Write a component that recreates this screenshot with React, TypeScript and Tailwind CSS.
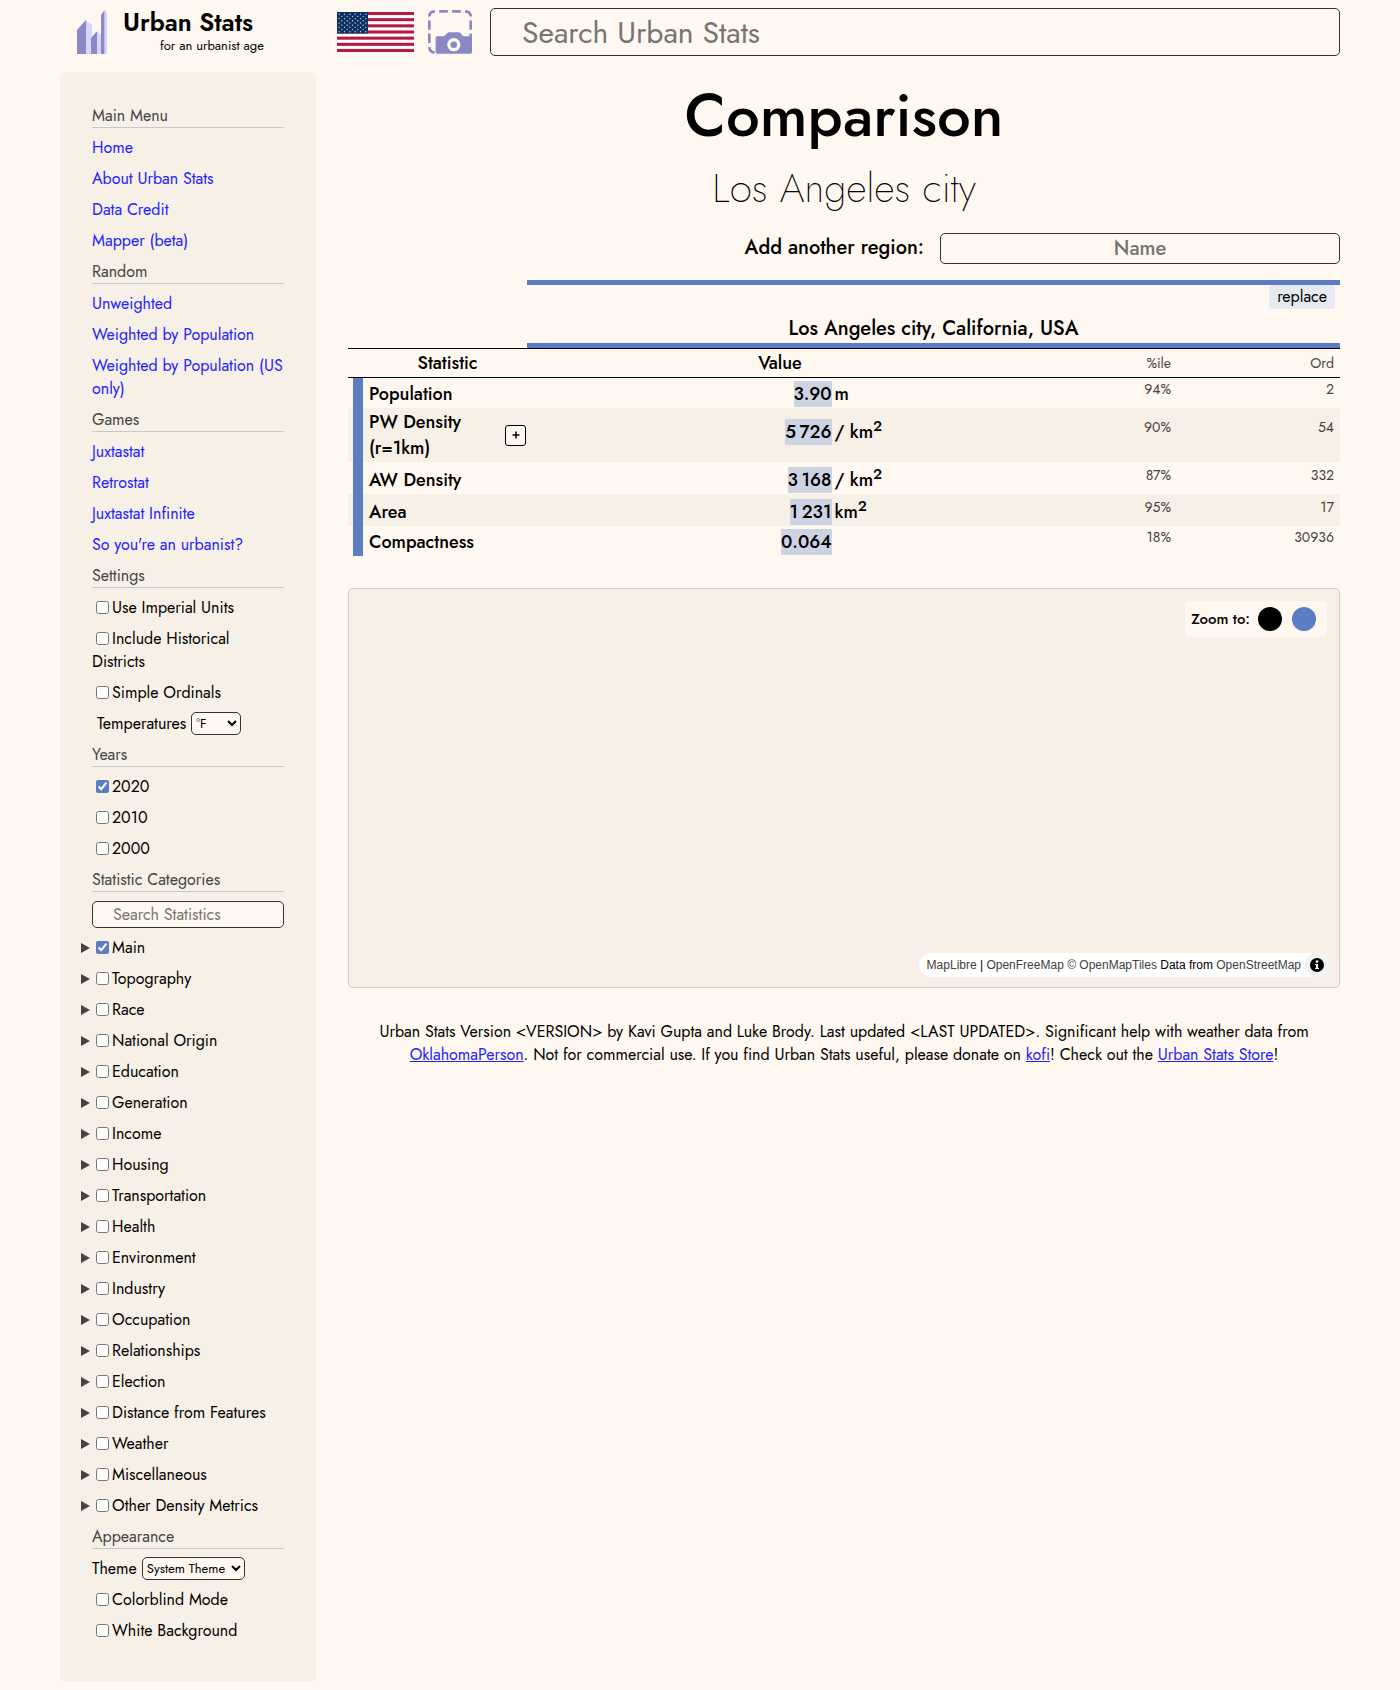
import type { ReactNode } from 'react';

function Logo() {
  return (
    <svg viewBox="0 0 90 132" className="h-11 w-[30px]" aria-hidden="true">
      <g fill="#8a89c4">
        <path d="M0 60 27 30V132H0Z" />
        <path d="M42 83 60 64V132H42Z" />
        <path d="M72 15 83 0V132H72Z" />
      </g>
      <g fill="#d5d5ff">
        <path d="M27 30 45 45V80L42 83V132H27Z" />
        <path d="M60 64 72 75V132H60Z" />
        <path d="M83 0 90 8V132H83Z" />
      </g>
    </svg>
  );
}

function Flag() {
  const stars = Array.from({ length: 9 }, (_, row) =>
    Array.from({ length: row % 2 === 0 ? 6 : 5 }, (_, col) => (
      <circle key={`${row}-${col}`} cx={6.5 + col * 16 + (row % 2) * 8} cy={6.5 + row * 6.6} r="2" />
    )),
  );
  return (
    <svg viewBox="0 0 231 120" preserveAspectRatio="none" className="h-10 w-[77px]" aria-hidden="true">
      <rect width="231" height="120" fill="#ffffff" />
      {Array.from({ length: 7 }, (_, i) => (
        <rect key={i} y={(i * 240) / 13} width="231" height={120 / 13} fill="#b31942" />
      ))}
      <rect width="93" height="64.6" fill="#0a3161" />
      <g fill="#ffffff" opacity="0.85">{stars}</g>
    </svg>
  );
}

function Camera() {
  return (
    <svg viewBox="0 0 133 133" className="size-11" aria-hidden="true">
      <g fill="none" stroke="#8a89c4" strokeWidth="8">
        <path d="M4 20Q4 4 21 4M34 4H60M73 4H99M112 4Q129 4 129 20" />
        <path d="M4 32V60M4 71V100M129 32V60M129 71V84M4 112Q5 127 20 129" />
      </g>
      <path
        fill="#8a89c4"
        fillRule="evenodd"
        d="M28 79H48Q53 78 56 72Q58 67 64 67H92Q98 67 100 72Q103 78 108 79H128Q133 79 133 84V127Q133 132 128 132H28Q23 132 23 127V84Q23 79 28 79ZM78 85A20 20 0 1 0 78 125A20 20 0 1 0 78 85Z"
      />
      <circle cx="78" cy="105" r="10" fill="#8a89c4" />
    </svg>
  );
}

function Section({ title, children }: { title: string; children: ReactNode }) {
  return (
    <section>
      <h2 className="mb-2 border-b border-[#c8c8cc] text-[#444444]">{title}</h2>
      <ul>{children}</ul>
    </section>
  );
}

function LinkItem({ children }: { children: string }) {
  return (
    <li className="mb-2">
      <a href="#" className="text-[#2222ff]">{children}</a>
    </li>
  );
}

function Check({ label, checked = false }: { label: string; checked?: boolean }) {
  return (
    <label>
      <input
        type="checkbox"
        defaultChecked={checked}
        className="mr-[3px] ml-1 size-[13px] align-[-1px] accent-[#5a7dc3]"
      />
      {label}
    </label>
  );
}

function CheckItem(props: { label: string; checked?: boolean }) {
  return (
    <li className="mb-2">
      <Check {...props} />
    </li>
  );
}

function Category({ label, checked }: { label: string; checked?: boolean }) {
  return (
    <li className="mb-2 -ml-[11px] flex items-center">
      <button type="button" aria-label={`Expand ${label}`} className="w-[11px]">
        <svg viewBox="0 0 9 10" className="mt-px h-[10px] w-[9px]" aria-hidden="true">
          <path d="M0 0 9 5 0 10Z" fill="#444444" />
        </svg>
      </button>
      <Check label={label} checked={checked} />
    </li>
  );
}

const categories = [
  'Main', 'Topography', 'Race', 'National Origin', 'Education', 'Generation', 'Income', 'Housing',
  'Transportation', 'Health', 'Environment', 'Industry', 'Occupation', 'Relationships', 'Election',
  'Distance from Features', 'Weather', 'Miscellaneous', 'Other Density Metrics',
];

const selectClass = 'ml-[5px] h-[23px] rounded-[5px] border border-[#333333] bg-[#fff8f0] text-[13px] text-black';

function Sidebar() {
  return (
    <nav className="w-64 shrink-0 rounded-[5px] bg-[#f7f0e6] p-8 text-[16px] leading-[23px]">
      <Section title="Main Menu">
        <LinkItem>Home</LinkItem>
        <LinkItem>About Urban Stats</LinkItem>
        <LinkItem>Data Credit</LinkItem>
        <LinkItem>Mapper (beta)</LinkItem>
      </Section>
      <Section title="Random">
        <LinkItem>Unweighted</LinkItem>
        <LinkItem>Weighted by Population</LinkItem>
        <LinkItem>Weighted by Population (US only)</LinkItem>
      </Section>
      <Section title="Games">
        <LinkItem>Juxtastat</LinkItem>
        <LinkItem>Retrostat</LinkItem>
        <LinkItem>Juxtastat Infinite</LinkItem>
        <LinkItem>So you're an urbanist?</LinkItem>
      </Section>
      <Section title="Settings">
        <CheckItem label="Use Imperial Units" />
        <CheckItem label="Include Historical Districts" />
        <CheckItem label="Simple Ordinals" />
        <li className="mb-2 flex items-center pl-[5px]">
          <label htmlFor="temperatures">Temperatures</label>
          <select id="temperatures" className={`w-[50px] ${selectClass}`}>
            <option>°F</option>
            <option>°C</option>
          </select>
        </li>
      </Section>
      <Section title="Years">
        <CheckItem label="2020" checked />
        <CheckItem label="2010" />
        <CheckItem label="2000" />
      </Section>
      <Section title="Statistic Categories">
        <li className="mb-2 flex pt-px">
          <input
            type="text"
            aria-label="Search Statistics"
            placeholder="Search Statistics"
            className="h-[27px] w-full rounded-[5px] border border-[#333333] bg-[#fff8f0] px-5 placeholder:text-[#757575]"
          />
        </li>
        {categories.map((label) => (
          <Category key={label} label={label} checked={label === 'Main'} />
        ))}
      </Section>
      <Section title="Appearance">
        <li className="mb-2 flex items-center">
          <label htmlFor="theme">Theme</label>
          <select id="theme" className={`w-[103px] ${selectClass}`}>
            <option>System Theme</option>
            <option>Light Theme</option>
            <option>Dark Theme</option>
          </select>
        </li>
        <CheckItem label="Colorblind Mode" />
        <CheckItem label="White Background" />
      </Section>
    </nav>
  );
}

type Row = { name: string; value: string; unit: string; squared?: boolean; pct: string; ord: string; plus?: boolean };

const rows: Row[] = [
  { name: 'Population', value: '3.90', unit: 'm', pct: '94%', ord: '2' },
  { name: 'PW Density (r=1km)', value: '5\u2009726', unit: '/ km', squared: true, pct: '90%', ord: '54', plus: true },
  { name: 'AW Density', value: '3\u2009168', unit: '/ km', squared: true, pct: '87%', ord: '332' },
  { name: 'Area', value: '1\u2009231', unit: 'km', squared: true, pct: '95%', ord: '17' },
  { name: 'Compactness', value: '0.064', unit: '', pct: '18%', ord: '30936' },
];

function StatsRow({ row }: { row: Row }) {
  const namePad = row.plus ? 'py-px' : row.squared ? 'pt-1' : 'pt-0.5';
  const valuePad = row.plus ? 'pb-1.5' : row.squared ? 'pt-1' : 'pt-0.5';
  const rankPad = row.plus ? 'pb-4' : row.squared ? 'pb-1.5' : 'pb-2';
  const rank = `pr-1.5 text-right text-[14px] leading-[18px] text-[#444444] ${rankPad}`;
  return (
    <tr className={`even:bg-[#f7f0e6] ${row.squared ? 'h-8' : 'h-[30px]'}`}>
      <td className="border-l-[5px] border-transparent bg-[#5a7dc3] bg-clip-padding" />
      <th scope="row" className={`pr-px pl-1.5 text-left font-medium ${namePad}`}>
        <div className="flex items-center justify-between">
          <span>{row.name}</span>
          {row.plus && (
            <button
              type="button"
              aria-label="Expand PW Density"
              className="flex size-[21px] shrink-0 items-center justify-center rounded-[3px] border border-black bg-[#fff8f0]"
            >
              <svg viewBox="0 0 8 8" className="size-2" aria-hidden="true">
                <path d="M4 0.5V7.5M0.5 4H7.5" stroke="black" strokeWidth="1.5" />
              </svg>
            </button>
          )}
        </div>
      </th>
      <td className={`pr-[3px] text-right font-medium ${valuePad}`}>
        <span className="inline-block bg-[#cdd3e3]">{row.value}</span>
      </td>
      <td className={`font-medium ${valuePad}`}>
        {row.unit}
        {row.squared && <sup className="text-[15px]">2</sup>}
      </td>
      <td className={rank}>{row.pct}</td>
      <td className={rank}>{row.ord}</td>
    </tr>
  );
}

function StatsTable() {
  const rankHead = 'border-y border-black pr-1.5 text-right text-[14px] font-normal text-[#444444]';
  return (
    <table className="mt-4 w-full table-fixed border-separate border-spacing-0 text-[18px] leading-[26px]">
      <colgroup>
        <col className="w-[15px]" />
        <col className="w-[164px]" />
        <col className="w-[31%]" />
        <col className="w-[20%]" />
        <col />
        <col className="w-[163px]" />
      </colgroup>
      <thead>
        <tr>
          <td colSpan={2} />
          <th colSpan={4} className="border-y-[5px] border-[#5a7dc3] font-medium">
            <div className="flex flex-col">
              <button
                type="button"
                className="mr-[5px] h-6 self-end rounded-[4px] bg-[#e6e9f0] px-2 text-[16px] leading-6 font-normal"
              >
                replace
              </button>
              <span className="h-[34px] pt-1 text-[20px] leading-8">Los Angeles city, California, USA</span>
            </div>
          </th>
        </tr>
        <tr className="h-[30px]">
          <th colSpan={2} className="border-y border-black pl-5 font-medium">Statistic</th>
          <th colSpan={2} className="border-y border-black font-medium">Value</th>
          <th className={rankHead}>%ile</th>
          <th className={rankHead}>Ord</th>
        </tr>
      </thead>
      <tbody>
        {rows.map((row) => (
          <StatsRow key={row.name} row={row} />
        ))}
      </tbody>
    </table>
  );
}

function MapPanel() {
  return (
    <div className="mt-8 flex h-[400px] flex-col items-end justify-between rounded-[5px] border border-[#cccccc] bg-[#f7f0e6] px-2.5 pt-3 pb-2.5">
      <div className="mr-0.5 flex h-9 items-center rounded-[6px] bg-[#fff8f0] pr-[11px] pl-1.5">
        <span className="mr-2 text-[15px] font-medium">Zoom to:</span>
        <button type="button" aria-label="Zoom to all regions" className="mr-2.5 size-6 rounded-full bg-black" />
        <button type="button" aria-label="Zoom to Los Angeles city" className="size-6 rounded-full bg-[#5a7dc3]" />
      </div>
      <div className="flex h-6 items-center rounded-full bg-white pl-2 font-['Liberation_Sans',Arial,sans-serif] text-[12px] leading-5 text-black">
        <p>
          <a href="#" className="text-[#404040]">MapLibre</a> | <a href="#" className="text-[#404040]">OpenFreeMap</a>{' '}
          <a href="#" className="text-[#404040]">© OpenMapTiles</a> Data from{' '}
          <a href="#" className="text-[#404040]">OpenStreetMap</a>
        </p>
        <button
          type="button"
          aria-label="Toggle attribution"
          className="ml-1 flex size-6 items-center justify-center rounded-full bg-[#f2f2f2]"
        >
          <svg viewBox="0 0 14 14" className="size-3.5" aria-hidden="true">
            <circle cx="7" cy="7" r="7" fill="black" />
            <circle cx="7" cy="3.6" r="1.4" fill="white" />
            <path d="M5 6H8V10H9V11H5V10H6V7H5Z" fill="white" />
          </svg>
        </button>
      </div>
    </div>
  );
}

export default function App() {
  const link = 'text-[#2222ff] underline';
  return (
    <div className="min-h-screen bg-[#fff8f0] px-[60px] py-2 font-[Jost,Lato,sans-serif] text-black">
      <header className="mb-4 flex h-12 items-center">
        <a href="#" className="flex w-[277px] shrink-0 items-center pl-[17px]">
          <Logo />
          <span className="flex flex-col gap-0.5 pb-0.5 pl-4">
            <span className="text-[25px] leading-[27px] font-semibold">Urban Stats</span>
            <span className="pl-[37px] text-[13px] leading-4">for an urbanist age</span>
          </span>
        </a>
        <button type="button" aria-label="United States" className="mr-[14px]">
          <Flag />
        </button>
        <button type="button" aria-label="Take a screenshot" className="mr-[18px]">
          <Camera />
        </button>
        <input
          type="text"
          aria-label="Search Urban Stats"
          placeholder="Search Urban Stats"
          className="h-12 min-w-0 flex-1 rounded-[5px] border border-[#333333] bg-[#fff8f0] px-[31px] text-[30px] placeholder:text-[#757575]"
        />
      </header>
      <div className="flex items-start gap-8">
        <Sidebar />
        <main className="min-w-0 flex-1">
          <h1 className="text-center text-[60px] leading-[88px] font-medium">Comparison</h1>
          <p className="text-center text-[40px] leading-[56px] font-extralight">Los Angeles city</p>
          <div className="mt-4 flex items-center justify-end gap-4 text-[20px] font-medium">
            <label htmlFor="region" className="leading-8">Add another region:</label>
            <input
              id="region"
              type="text"
              placeholder="Name"
              className="mt-px h-[31px] w-[400px] rounded-[5px] border border-[#333333] bg-[#fff8f0] text-center placeholder:text-[#757575]"
            />
          </div>
          <StatsTable />
          <MapPanel />
          <footer className="mt-8 px-4 text-center text-[16px] leading-[23px]">
            Urban Stats Version &lt;VERSION&gt; by Kavi Gupta and Luke Brody. Last updated &lt;LAST UPDATED&gt;.
            Significant help with weather data from <a href="#" className={link}>OklahomaPerson</a>. Not for commercial
            use. If you find Urban Stats useful, please donate on <a href="#" className={link}>kofi</a>! Check out
            the <a href="#" className={link}>Urban Stats Store</a>!
          </footer>
        </main>
      </div>
    </div>
  );
}
